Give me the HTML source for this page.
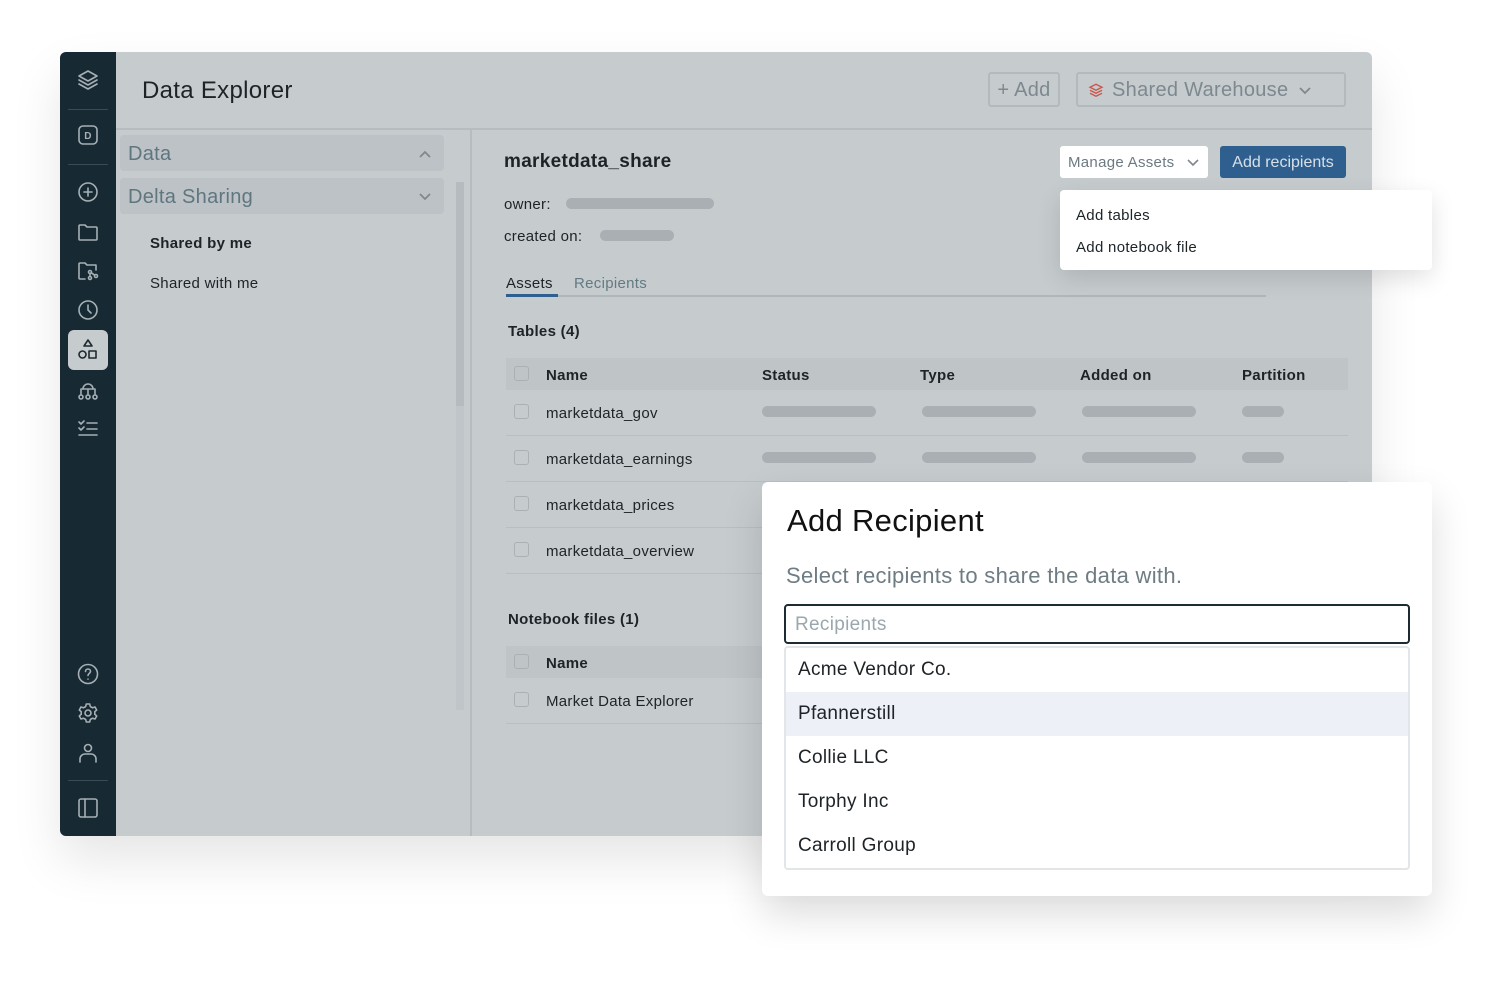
<!DOCTYPE html>
<html><head><meta charset="utf-8"><style>
*{box-sizing:border-box;margin:0;padding:0}
body{width:1492px;height:996px;background:#fff;font-family:"Liberation Sans",sans-serif;position:relative;overflow:hidden;color:#1d2327;letter-spacing:.3px}
.a{position:absolute}
.frame{left:60px;top:52px;width:1312px;height:784px;background:#c6cbce;border-radius:6px;overflow:hidden;box-shadow:0 24px 50px rgba(0,0,0,.10)}
.side{left:0;top:0;width:56px;height:784px;background:#172932}
.ic{position:absolute;left:16px;width:24px;height:24px}
.ic svg{width:24px;height:24px;fill:none;stroke:#a6b0b5;stroke-width:1.6;stroke-linecap:round;stroke-linejoin:round}
.sk{position:absolute;height:11px;border-radius:6px;background:#a9afb3}
.cb{position:absolute;width:15px;height:15px;border:1.5px solid #aab0b4;border-radius:3px}
.t15{font-size:15px;margin-top:2px}
.row{position:absolute;left:446px;width:842px;height:1px;background:#b8bec1}
</style></head><body>
<div class="a frame">
 <div class="a side">
  <div class="ic" style="top:16px"><svg viewBox="0 0 24 24"><path d="M12 3l9 5-9 5-9-5z M3 12l9 5 9-5 M3 16l9 5 9-5"/></svg></div>
  <div class="a" style="left:8px;top:57px;width:40px;height:1px;background:#3a4b54"></div>
  <div class="ic" style="top:71px"><svg viewBox="0 0 24 24"><rect x="3" y="3" width="18" height="18" rx="4"/><text x="12" y="16" font-size="10" font-family="Liberation Sans" fill="#a6b0b5" stroke="none" text-anchor="middle" font-weight="bold">D</text></svg></div>
  <div class="a" style="left:8px;top:112px;width:40px;height:1px;background:#3a4b54"></div>
  <div class="ic" style="top:128px"><svg viewBox="0 0 24 24"><circle cx="12" cy="12" r="9"/><path d="M12 8v8M8 12h8"/></svg></div>
  <div class="ic" style="top:168px"><svg viewBox="0 0 24 24"><path d="M3 6a1 1 0 011-1h5l2 2h9a1 1 0 011 1v11a1 1 0 01-1 1H4a1 1 0 01-1-1z"/></svg></div>
  <div class="ic" style="top:207px"><svg viewBox="0 0 24 24"><path d="M9 20H4a1 1 0 01-1-1V5a1 1 0 011-1h5l2 2h9v5"/><circle cx="14" cy="13" r="1.5"/><circle cx="14" cy="19" r="1.5"/><circle cx="20" cy="17" r="1.5"/><path d="M14 14.5v3M15.3 13.8l3.4 2.4"/></svg></div>
  <div class="ic" style="top:246px"><svg viewBox="0 0 24 24"><circle cx="12" cy="12" r="9"/><path d="M12 7v5l3 3"/></svg></div>
  <div class="a" style="left:8px;top:278px;width:40px;height:40px;border-radius:6px;background:#c6cbce"></div>
  <div class="ic" style="top:286px"><svg viewBox="0 0 24 24" style="stroke:#1d2a31"><path d="M12 2l4 6H8z"/><circle cx="6.5" cy="16.5" r="3.5"/><rect x="13" y="13" width="7" height="7"/></svg></div>
  <div class="ic" style="top:326px"><svg viewBox="0 0 24 24"><path d="M7 11a5 5 0 0110 0M5 11h14M12 11v5M5 11v5M19 11v5"/><circle cx="5" cy="19" r="2"/><circle cx="12" cy="19" r="2"/><circle cx="19" cy="19" r="2"/></svg></div>
  <div class="ic" style="top:364px"><svg viewBox="0 0 24 24"><path d="M3 6l2 2 3-3M3 12l2 2 3-3M11 7h10M11 13h10M3 19h18"/></svg></div>
  <div class="ic" style="top:610px"><svg viewBox="0 0 24 24"><circle cx="12" cy="12" r="9.5"/><path d="M9.5 9.5a2.5 2.5 0 015 0c0 1.8-2.5 2-2.5 4M12 17v.1"/></svg></div>
  <div class="ic" style="top:649px"><svg viewBox="0 0 24 24"><circle cx="12" cy="12" r="3"/><path d="M10.3 3h3.4l.6 2.5 2.2 1.3 2.5-.8 1.7 3-1.9 1.7v2.6l1.9 1.7-1.7 3-2.5-.8-2.2 1.3-.6 2.5h-3.4l-.6-2.5-2.2-1.3-2.5.8-1.7-3 1.9-1.7v-2.6L3.3 9l1.7-3 2.5.8 2.2-1.3z"/></svg></div>
  <div class="ic" style="top:689px"><svg viewBox="0 0 24 24"><circle cx="12" cy="7" r="3.5"/><path d="M4 21v-3a5 5 0 015-5h6a5 5 0 015 5v3"/></svg></div>
  <div class="a" style="left:8px;top:728px;width:40px;height:1px;background:#3a4b54"></div>
  <div class="ic" style="top:744px"><svg viewBox="0 0 24 24"><rect x="3" y="3" width="18" height="18" rx="2"/><path d="M9 3v18"/></svg></div>
 </div>
 <div class="a" style="left:82px;top:25px;font-size:24px;color:#1d2327">Data Explorer</div>
 <div class="a" style="left:928px;top:20px;width:72px;height:35px;border:2px solid #b3babe;border-radius:3px;color:#7d898f;font-size:20px;line-height:33px;text-align:center">+ Add</div>
 <div class="a" style="left:1016px;top:20px;width:270px;height:35px;border:2px solid #b3babe;border-radius:3px;color:#7d898f;font-size:20px;line-height:33px;padding-left:34px">Shared Warehouse
  <svg class="a" style="left:9px;top:8px" width="18" height="18" viewBox="0 0 24 24" fill="none" stroke="#c9584c" stroke-width="1.8"><path d="M12 3l8 4-8 4-8-4zM4 11l8 4 8-4M4 15l8 4 8-4"/></svg>
  <svg class="a" style="left:220px;top:12px" width="14" height="10" viewBox="0 0 14 10" fill="none" stroke="#7d898f" stroke-width="1.8"><path d="M2 2l5 5 5-5"/></svg></div>
 <div class="a" style="left:56px;top:76px;width:1256px;height:2px;background:#b6bcbf"></div>
 <div class="a" style="left:410px;top:78px;width:2px;height:706px;background:#b6bcbf"></div>
 <div class="a" style="left:60px;top:83px;width:324px;height:36px;background:#bcc2c5;border-radius:4px;color:#5f7680;font-size:20px;line-height:38px;padding-left:8px">Data
  <svg class="a" style="left:298px;top:14px" width="14" height="10" viewBox="0 0 14 10" fill="none" stroke="#7d898f" stroke-width="1.8"><path d="M2 8l5-5 5 5"/></svg></div>
 <div class="a" style="left:60px;top:126px;width:324px;height:36px;background:#bcc2c5;border-radius:4px;color:#5f7680;font-size:20px;line-height:38px;padding-left:8px">Delta Sharing
  <svg class="a" style="left:298px;top:14px" width="14" height="10" viewBox="0 0 14 10" fill="none" stroke="#7d898f" stroke-width="1.8"><path d="M2 2l5 5 5-5"/></svg></div>
 <div class="a" style="left:396px;top:130px;width:8px;height:224px;background:#b5bbbe"></div>
 <div class="a" style="left:396px;top:354px;width:8px;height:304px;background:#bfc5c8"></div>
 <div class="a t15" style="left:90px;top:181px;font-weight:bold">Shared by me</div>
 <div class="a t15" style="left:90px;top:221px">Shared with me</div>
 <div class="a" style="left:444px;top:99px;font-size:19px;font-weight:bold">marketdata_share</div>
 <div class="a t15" style="left:444px;top:142px">owner:</div><div class="sk" style="left:506px;top:146px;width:148px"></div>
 <div class="a t15" style="left:444px;top:174px">created on:</div><div class="sk" style="left:540px;top:178px;width:74px"></div>
 <div class="a" style="left:1000px;top:94px;width:148px;height:32px;background:#fff;border-radius:3px;color:#6c7a81;font-size:15px;line-height:34px;padding-left:8px">Manage Assets
  <svg class="a" style="left:126px;top:12px" width="14" height="10" viewBox="0 0 14 10" fill="none" stroke="#7d898f" stroke-width="1.6"><path d="M2 2l5 5 5-5"/></svg></div>
 <div class="a" style="left:1160px;top:94px;width:126px;height:32px;background:#2f5f8f;border-radius:3px;color:#d7e0e8;font-size:16px;line-height:34px;text-align:center;letter-spacing:0">Add recipients</div>
 <div class="a t15" style="left:446px;top:221px;color:#1d2327">Assets</div>
 <div class="a t15" style="left:514px;top:221px;color:#637a84">Recipients</div>
 <div class="a" style="left:446px;top:243px;width:760px;height:2px;background:#b0b6b9"></div>
 <div class="a" style="left:446px;top:242px;width:52px;height:3px;background:#2f5f8f"></div>
 <div class="a t15" style="left:448px;top:269px;font-weight:bold">Tables (4)</div>
 <div class="a" style="left:446px;top:306px;width:842px;height:32px;background:#bfc4c7"></div>
 <div class="cb" style="left:454px;top:314px"></div>
 <div class="a t15" style="left:486px;top:313px;font-weight:bold">Name</div>
 <div class="a t15" style="left:702px;top:313px;font-weight:bold">Status</div>
 <div class="a t15" style="left:860px;top:313px;font-weight:bold">Type</div>
 <div class="a t15" style="left:1020px;top:313px;font-weight:bold">Added on</div>
 <div class="a t15" style="left:1182px;top:313px;font-weight:bold">Partition</div>
 <div class="cb" style="left:454px;top:352px"></div><div class="a t15" style="left:486px;top:351px">marketdata_gov</div>
 <div class="sk" style="left:702px;top:354px;width:114px"></div><div class="sk" style="left:862px;top:354px;width:114px"></div><div class="sk" style="left:1022px;top:354px;width:114px"></div><div class="sk" style="left:1182px;top:354px;width:42px"></div>
 <div class="row" style="top:383px"></div>
 <div class="cb" style="left:454px;top:398px"></div><div class="a t15" style="left:486px;top:397px">marketdata_earnings</div>
 <div class="sk" style="left:702px;top:400px;width:114px"></div><div class="sk" style="left:862px;top:400px;width:114px"></div><div class="sk" style="left:1022px;top:400px;width:114px"></div><div class="sk" style="left:1182px;top:400px;width:42px"></div>
 <div class="row" style="top:429px"></div>
 <div class="cb" style="left:454px;top:444px"></div><div class="a t15" style="left:486px;top:443px">marketdata_prices</div>
 <div class="row" style="top:475px"></div>
 <div class="cb" style="left:454px;top:490px"></div><div class="a t15" style="left:486px;top:489px">marketdata_overview</div>
 <div class="row" style="top:521px"></div>
 <div class="a t15" style="left:448px;top:557px;font-weight:bold">Notebook files (1)</div>
 <div class="a" style="left:446px;top:594px;width:842px;height:32px;background:#bfc4c7"></div>
 <div class="cb" style="left:454px;top:602px"></div><div class="a t15" style="left:486px;top:601px;font-weight:bold">Name</div>
 <div class="cb" style="left:454px;top:640px"></div><div class="a t15" style="left:486px;top:639px">Market Data Explorer</div>
 <div class="row" style="top:671px"></div>
</div>
<div class="a" style="left:1060px;top:190px;width:372px;height:80px;background:#fff;border-radius:4px;box-shadow:0 8px 24px rgba(0,0,0,.12)">
 <div class="a t15" style="left:16px;top:15px">Add tables</div>
 <div class="a t15" style="left:16px;top:47px">Add notebook file</div>
</div>
<div class="a" style="left:762px;top:482px;width:670px;height:414px;background:#fff;border-radius:6px;box-shadow:0 18px 40px rgba(0,0,0,.14)">
 <div class="a" style="left:25px;top:21px;font-size:31px;color:#111">Add Recipient</div>
 <div class="a" style="left:24px;top:81px;font-size:22px;color:#6e7c83">Select recipients to share the data with.</div>
 <div class="a" style="left:22px;top:122px;width:626px;height:40px;border:2px solid #1d2c34;border-radius:4px;font-size:19px;color:#9aa7ae;line-height:38px;padding-left:9px">Recipients</div>
 <div class="a" style="left:22px;top:164px;width:626px;height:224px;border:2px solid #e3e6e8;border-radius:4px;overflow:hidden;font-size:19px;color:#1d2327">
  <div style="height:44px;line-height:44px;padding-left:12px">Acme Vendor Co.</div>
  <div style="height:44px;line-height:44px;padding-left:12px;background:#edf1f7">Pfannerstill</div>
  <div style="height:44px;line-height:44px;padding-left:12px">Collie LLC</div>
  <div style="height:44px;line-height:44px;padding-left:12px">Torphy Inc</div>
  <div style="height:44px;line-height:44px;padding-left:12px">Carroll Group</div>
 </div>
</div>
</body></html>
